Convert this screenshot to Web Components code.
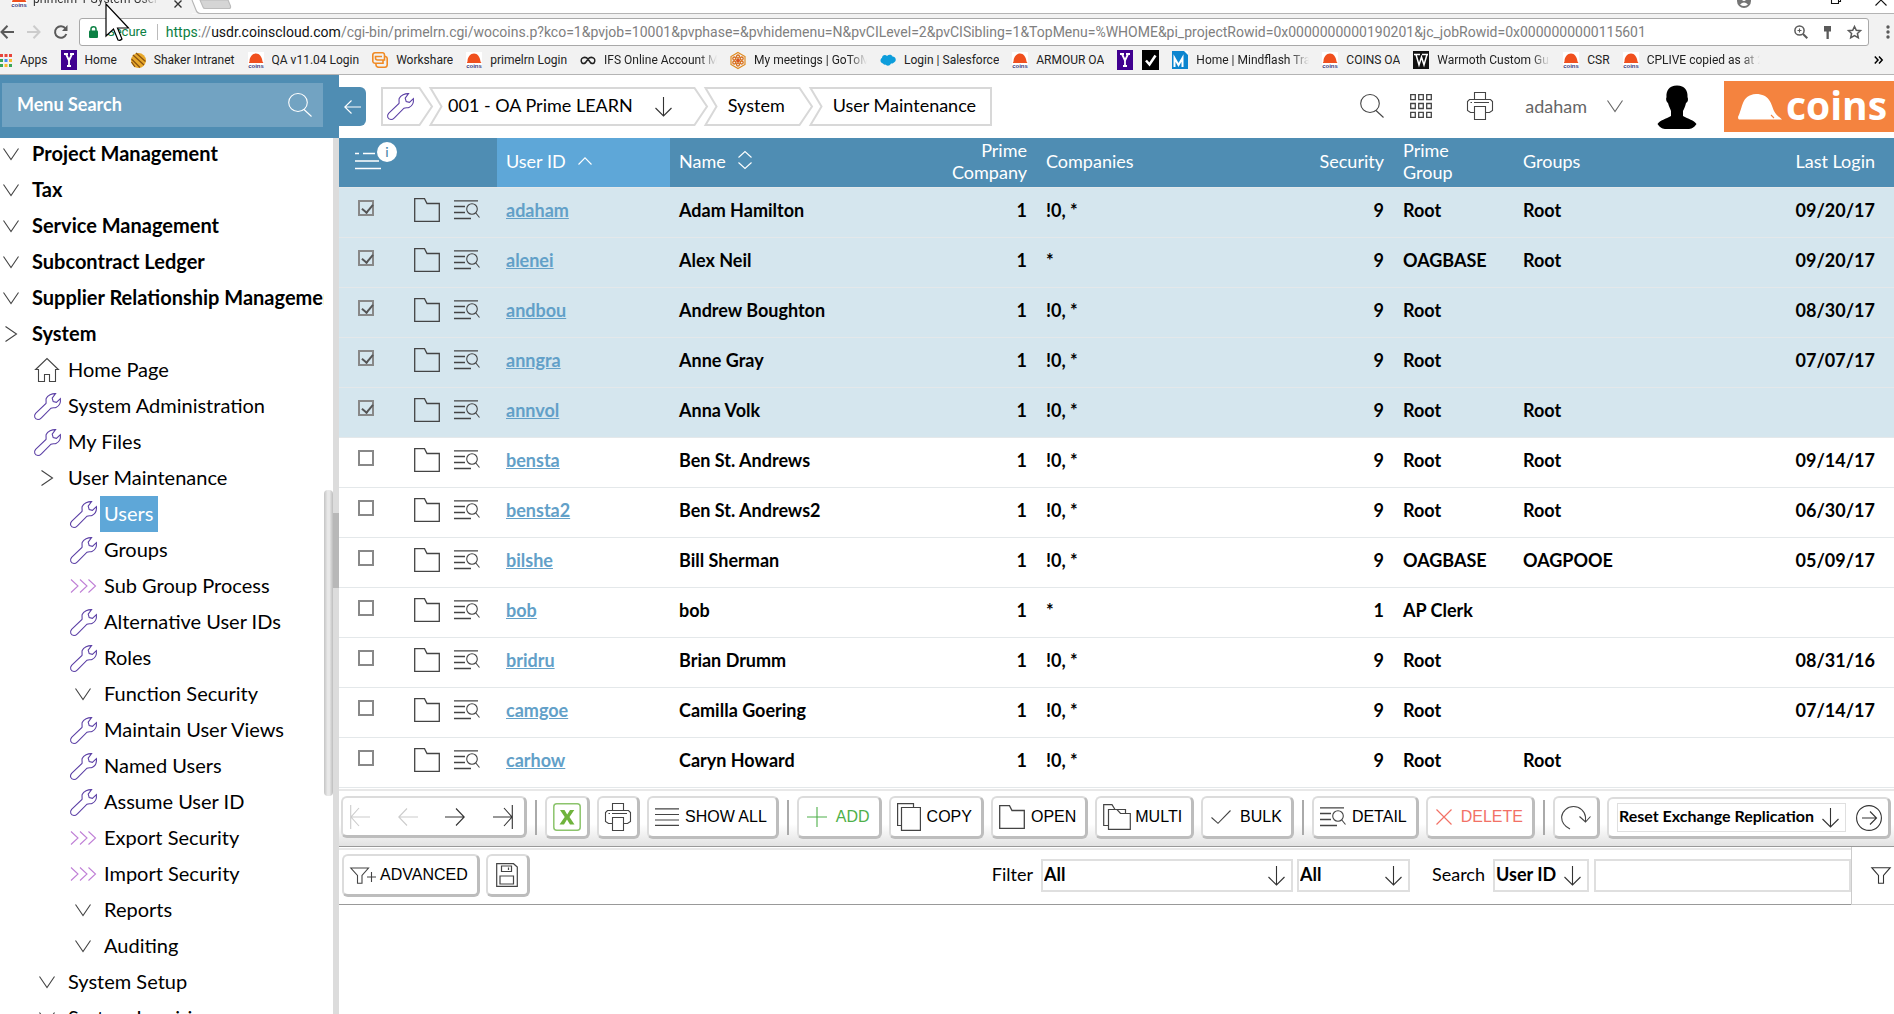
<!DOCTYPE html>
<html lang="en">
<head>
<meta charset="utf-8">
<title>primelrn-1-System-User</title>
<style>
  html, body { height: 100%; }
  body { margin: 0; overflow: hidden; background: #fff; color: #000; font: 18px/22px Lato, "Liberation Sans", sans-serif; }
</style>
</head>
<body>
<coins-app></coins-app>
<script>
const WRENCH = '<path d="M21.6 .6C18 .4 13.6 2.400 12.200 5.400C11.700 7 12.400 9 12 10.400L1.600 20.400C-.6 23 .8 26.400 4 26.500C5.600 26.500 6.400 25.800 7.400 24.800L17 15.200C18.600 14.400 20.400 15 22 14.400C25 13.200 26.800 9.800 26.400 5.600L22.400 9.400L19.200 8.600L18.200 5.200Z"/>';
const HELMET = '<rect width="16" height="16" fill="#fff" stroke="none"/><path d="M1.500 9.500C1.500 5 4.500 1.500 8 1.500S14 5 14.500 9.500L15.500 11H.8Z" fill="#f0501e" stroke="none"/><text x="8" y="15.500" text-anchor="middle" font-family="Liberation Sans" font-weight="700" font-size="6" fill="#3a3a7a" stroke="none">coins</text>';
const YAHOO = '<rect width="16" height="20" fill="#400090" stroke="none"/><path d="M3 4H7M9 4H13M5 4L8 10.500L11 4M8 10V16M6 16H10" stroke="#fff" stroke-width="1.800"/>';
const ICONS = {
  wrench: [27, 27, WRENCH],
  down: [16, 12, '<path d="M.5 .5L8 11.500L15.500 .5"/>'],
  right: [12, 16, '<path d="M.5 .5L11.500 8L.5 15.500"/>'],
  triple: [26, 14, '<path d="M1 .5L8 7L1 13.500M10 .5L17 7L10 13.500M18.500 .5L25.500 7L18.500 13.500"/>'],
  home: [24, 24, '<path d="M.6 11.500L12 .6L23.400 11.500H20.500V23.500H14.500V16.500H9.500V23.500H3.500V11.500Z"/>'],
  search: [24, 24, '<ellipse cx="10" cy="9.500" rx="9.300" ry="9"/><path d="M16 16.500L23.500 23.500"/>'],
  back: [17, 14, '<path d="M.8 7H17M7.500 .5L.8 7L7.500 13.500"/>'],
  arrow: [17, 20, '<path d="M8.500 0V19M.5 11L8.500 19L16.500 11"/>'],
  apps: [22, 24, '<path d="M.7 .7h4.600v5h-4.600zM8.700 .7h4.600v5h-4.600zM16.700 .7h4.600v5h-4.600zM.7 9.500h4.600v5h-4.600zM8.700 9.500h4.600v5h-4.600zM16.700 9.500h4.600v5h-4.600zM.7 18.300h4.600v5h-4.600zM8.700 18.300h4.600v5h-4.600zM16.700 18.300h4.600v5h-4.600z" stroke-width="1.300"/>'],
  print: [26, 28, '<path d="M7.500 7.500V.5H18.500V7.500M7.500 20.500H3.500L.5 18.500V9.500L2.500 7.500H23.500L25.500 9.500V18.500L22.500 20.500H18.500M7.500 14.500H18.500V27.500H7.500ZM3.500 10.500H5M7 10.500H22"/>'],
  person: [40, 44, '<path d="M20 .5C12 .5 9 6 9.500 12C8.500 14 9.500 17 11 18C12 22 13.500 24 14 26V31C9 34 3 35 .5 39C3 43 6 44 9 44H31C34 44 37 43 39.500 39C37 35 31 34 26 31V26C27 24 28 22 29 18C31 17 31.500 14 30.500 12C31 6 28 .5 20 .5Z" fill="#000" stroke="none"/>'],
  helmet: [44, 26, '<path d="M0 23C5 14 3 1 18 0C31 0 33 9 36 17C38 21 40 22 44 25.500H1Q0 25 0 23Z" fill="#fff" stroke="none"/><path d="M33 21L36 24" stroke="#f4833f"/>'],
  listmenu: [26, 18, '<path d="M0 1.500H4M8 1.500H20M0 9H24M0 16.500H26" stroke-width="1.500"/>'],
  up: [14, 8, '<path d="M.5 7.500L7 .8L13.500 7.500"/>'],
  sort: [14, 18, '<path d="M.5 6.500L7 .6L13.500 6.500M.5 11.500L7 17.400L13.500 11.500"/>'],
  folder: [26, 24, '<path d="M.7 .7H10.500L13 5.500H25.300V23.300H.7Z" stroke-width="1.300"/>'],
  multi: [28, 26, '<path d="M5.500 21.500H.7V.7H9L12 5.500H22.500V9M5.500 5.500H14L17.500 9.500H27.300V25.300H5.500Z" stroke-width="1.200"/>'],
  detail: [26, 20, '<path d="M0 .8H24M0 6.500H11M0 12.500H11M0 18.500H17" stroke-width="1.300"/><circle cx="18" cy="9" r="5.300"/><path d="M21.800 13L25.500 17.500"/>'],
  first: [20, 24, '<path d="M.7 0V24M20 12H1.500M9 3L1 12L9 21"/>'],
  prev: [20, 18, '<path d="M20 9H.8M9 .5L.8 9L9 17.500"/>'],
  next: [20, 18, '<path d="M0 9H19.200M11 .5L19.200 9L11 17.500"/>'],
  last: [20, 24, '<path d="M19.300 0V24M0 12H18.500M11 3L19 12L11 21"/>'],
  excel: [28, 28, '<rect x=".8" y=".8" width="26.400" height="26.400" rx="3" stroke="#8cc46c" stroke-width="1.500"/><path d="M7 7H11.500L14.200 11.500L17 7H21.300L16.500 14L21.500 21.500H17L14 16.500L11 21.500H6.500L11.700 14Z" fill="#6fb33c" stroke="none"/>'],
  lines: [24, 18, '<path d="M0 .8H24M0 6.500H24M0 12H24M0 17.300H24" stroke-width="1.200"/>'],
  plus: [20, 20, '<path d="M10 0V20M0 10H20"/>'],
  copy: [24, 28, '<path d="M4.500 22.500H.6V.6H16.500V4.500M4.500 4.500H23.400V27.400H4.500Z" stroke-width="1.200"/>'],
  tick: [20, 14, '<path d="M.5 7.500L7 13.300L19.500 .5"/>'],
  cross: [16, 16, '<path d="M.5 .5L15.500 15.500M15.500 .5L.5 15.500" stroke-width="1.200"/>'],
  redo: [30, 25, '<path d="M9 24C3 21 .6 16 .6 12A12 11.500 0 0 1 24.500 12V17M18.500 11.500L24.500 17L29.500 11.500"/>'],
  go: [26, 26, '<circle cx="13" cy="13" r="12.400"/><path d="M6 13H20.500M14 6.500L20.500 13L14 19.500"/>'],
  funnel: [20, 17, '<path d="M.8 .7H19.200L12.500 8.500V16.300H7.500V8.500Z"/>'],
  funnelplus: [26, 17, '<path d="M.8 1H18.500L12 8.500V16.300H7.500V8.500ZM17 10H26M21.500 5V15"/>'],
  save: [22, 24, '<path d="M.7 .7H17.500L21.300 4V23.300H.7ZM5.500 3H15.500V8.500H5.500ZM4 13H17.500V21H4ZM12.500 4.500V7" stroke-width="1.200"/>'],
  grid9: [12, 13, '<g stroke="none"><path d="M0 0h3v3h-3zM4.500 0h3v3h-3zM9 0h3v3h-3z" fill="#e8453c"/><path d="M0 5h3v3h-3z" fill="#3aa757"/><path d="M4.500 5h3v3h-3z" fill="#4688f1"/><path d="M9 5h3v3h-3zM4.500 10h3v3h-3z" fill="#f9bb2d"/><path d="M0 10h3v3h-3zM9 10h3v3h-3z" fill="#3aa757"/></g>'],
  coins: [16, 16, HELMET],
  yahoo: [16, 20, YAHOO],
  shaker: [16, 17, '<circle cx="8.500" cy="8.500" r="7.500" fill="#e8a92c" stroke="none"/><path d="M3 3L14 13M6 1L15.500 9.500M1.500 7L10 15.500M1.500 10L5 15" stroke="#8a5210" stroke-width="1.300"/>'],
  workshare: [16, 16, '<path d="M3 .8H11Q12.500 1 12.500 3V8H5.500Q3.500 8 3.500 6V4.500H10M3 .8Q.8 1 .8 3V9.500Q1 11 3 11.200H4M12.500 4.500H13.500Q15.200 4.800 15.200 6.500V13Q15 15.200 13 15.200H6.500Q4.200 15 4 13V11.200H11V8" stroke="#f08a24" stroke-width="1.600"/>'],
  ifs: [16, 10, '<path d="M2 8C-1 3 5 .8 8 4C11 .8 17 3 14 8Q11.500 9.500 10 7L8 4L6 7Q4.500 9.500 2 8" stroke="#222" stroke-width="1.500"/>'],
  goto: [16, 17, '<path d="M8 .5L15 4.500V12.500L8 16.500L1 12.500V4.500Z" stroke="#e08a1e" stroke-width="1.200"/><circle cx="8" cy="8.500" r="2" fill="#d9541e" stroke="none"/><g fill="none" stroke="#d9701e" stroke-width="1.300"><circle cx="8" cy="4.500" r="1.500"/><circle cx="8" cy="12.500" r="1.500"/><circle cx="4.300" cy="6.500" r="1.500"/><circle cx="11.700" cy="6.500" r="1.500"/><circle cx="4.300" cy="10.500" r="1.500"/><circle cx="11.700" cy="10.500" r="1.500"/></g>'],
  cloud: [16, 12, '<path d="M3 9.500C-.5 8.500 .2 4.500 2 4C2 1 5.500 0 7 2C9 0 12 .8 12.500 2.500C16 2.500 17 7 14 8.500C13 9.500 12 9.500 11 9.500C9.500 12.500 6.500 12 5.500 10.500C4.500 11 3.500 10.500 3 9.500Z" fill="#0d9ddb" stroke="none"/>'],
  check: [17, 20, '<rect width="17" height="20" fill="#000" stroke="none"/><path d="M4 10.500L7.500 14.500L13.500 5.500" stroke="#fff" stroke-width="2.500"/>'],
  mind: [16, 18, '<rect width="16" height="18" fill="#0c85cf" stroke="none"/><path d="M2.500 16V7L6.500 14L10.500 7V16" stroke="#fff" stroke-width="2"/><path d="M12 0H16V4Z" fill="#fff" stroke="none"/>'],
  wsquare: [16, 18, '<rect width="16" height="18" fill="#111" stroke="none"/><path d="M1 3.500H7M9 3.500H15M3 3.500L6 14L8.500 6L11 14L14 3.500" stroke="#fff" stroke-width="1.500"/>'],
  navback: [14, 14, '<path d="M14 7H1.500M7.500 .8L1.500 7L7.500 13.200" stroke-width="2"/>'],
  navnext: [14, 14, '<path d="M0 7H12.500M6.500 .8L12.500 7L6.500 13.200" stroke-width="2"/>'],
  reload: [14, 14, '<path d="M12.300 9A5.800 5.800 0 1 1 11.500 3.500" stroke-width="2"/><path d="M13.500 0V6H8Z" fill="currentColor" stroke="none"/>'],
  lock: [9, 12, '<rect y="4.500" width="9" height="7.500" rx="1" fill="#0b8043" stroke="none"/><path d="M2 5V3Q2 .8 4.500 .8T7 3V5" stroke="#0b8043" stroke-width="1.500"/>'],
  zoom: [14, 14, '<circle cx="5.500" cy="5.500" r="4.600" stroke-width="1.500"/><path d="M9 9L13.300 13.300" stroke-width="2"/><path d="M3.500 5.500H7.500M5.500 3.500V7.500"/>'],
  key: [9, 13, '<path d="M1 0H8V5.500H5.800V13H3.500V5.500H1Z" fill="currentColor" stroke="none"/>'],
  star: [15, 14, '<path d="M7.500 1.500L9.300 5.300L13.500 5.700L10.400 8.500L11.300 12.700L7.500 10.500L3.700 12.700L4.600 8.500L1.500 5.700L5.700 5.300Z" stroke-width="1.500"/>'],
  dots: [4, 14, '<g fill="currentColor" stroke="none"><circle cx="2" cy="2" r="1.700"/><circle cx="2" cy="7" r="1.700"/><circle cx="2" cy="12" r="1.700"/></g>'],
  account: [14, 14, '<circle cx="7" cy="7" r="7" fill="#757575" stroke="none"/><circle cx="7" cy="5" r="2" fill="#fff" stroke="none"/><path d="M3 10.500Q7 6.500 11 10.500Q7 13.500 3 10.500" fill="#fff" stroke="none"/>'],
  restore: [10, 10, '<path d="M.5 2.500H7.500V9.500H.5ZM2.500 2V.5H9.500V7.500H8"/>'],
  close: [12, 12, '<path d="M.5 .5L11.500 11.500M11.500 .5L.5 11.500"/>'],
  tabclose: [8, 8, '<path d="M.5 .5L7.500 7.500M7.500 .5L.5 7.500" stroke-width="1.400"/>'],
  more: [9, 8, '<path d="M.8 .5L4 4L.8 7.500M5 .5L8.200 4L5 7.500" stroke-width="1.500"/>'],
  tabedge: [42, 14, '<path d="M0 0L4 10Q5 13.500 9 13.500H0Z" fill="#f2f2f2" stroke="none"/><path d="M0 0L4 10Q5 13.500 9 13.500H42" stroke="#b4b4b4"/><path d="M8 0L11 7Q11.500 8.500 13 8.500H37Q39 8.500 38.500 6L36 0Z" fill="#d5d5d5" stroke="#bcbcbc"/>'],
  pointer: [26, 40, '<path d="M1 1V33L8.500 26L13 37Q15 38 17 36L12.500 25H23.500Z" fill="#fff" stroke="#000" stroke-width="1.200"/>'],
  notch: [14, 39, '<path d="M14 1H1.500L12.500 19.500L1.500 38H14" stroke-width="2"/>'],
  tip: [14, 39, '<path d="M0 1H.5L13 19.500L.5 38H0" stroke-width="2"/>']
};

/* Registers an element whose shadow root is filled by css and a markup function. */
function component(tag, css, markup) {
  customElements.define(tag, class extends HTMLElement {
    constructor() { super(); this.attachShadow({ mode: 'open' }); }
    connectedCallback() {
      this.shadowRoot.innerHTML = `<style>*{box-sizing:border-box}${css}</style>${markup(this)}`;
    }
  });
}
const attr = (el, n, d = '') => el.getAttribute(n) ?? d;

component('ui-icon', ':host{display:inline-flex;flex:none}svg{display:block;overflow:visible}', el => {
  const [w, h, body] = ICONS[attr(el, 'name')];
  return `<svg width="${w}" height="${h}" viewBox="0 0 ${w} ${h}" fill="none" stroke="currentColor" stroke-width="1.100" aria-hidden="true">${body}</svg>`;
});

/* ---------- Browser frame ---------- */
component('book-mark', `
  :host{display:block;flex:none}
  a{display:flex;align-items:center;gap:8px;height:20px;color:#222;text-decoration:none}
  span{overflow:hidden;white-space:nowrap}
  :host([cut]) span{width:113px;-webkit-mask-image:linear-gradient(90deg,#000 84%,transparent)}
`, el => `<a href="#"${el.textContent ? '' : ' aria-label="Bookmark"'}><ui-icon name="${attr(el, 'icon')}"></ui-icon>${el.textContent ? '<span><slot></slot></span>' : ''}</a>`);

component('browser-frame', `
  :host{display:block;flex:none;background:#f2f2f2;font:12px/16px Roboto,"Noto Sans",sans-serif;border-bottom:1px solid #b4b4b4}
  .strip{display:flex;height:14px;overflow:hidden;background:#fff}
  .tab{display:flex;align-items:flex-start;width:192px;padding-left:11px;background:#f2f2f2;gap:6px;color:#333}
  .tab ui-icon,.tab span{margin-top:-9px}
  .tab span{flex:none;width:126px;overflow:hidden;white-space:nowrap;-webkit-mask-image:linear-gradient(90deg,#000 86%,transparent)}
  .tab .x{margin:0 0 0 9px}
  .rest{flex:1;display:flex;justify-content:flex-end;border-bottom:1px solid #b4b4b4;padding-right:7px;color:#111}
  .rest ui-icon{margin-top:-6px}
  .acc{margin-right:80px}.res{margin-right:34px}
  .nav{display:flex;align-items:center;margin-top:4px;height:28px;color:#5a5a5a}
  button{border:0;background:none;padding:0;display:flex;color:inherit}
  .b{width:14px}.f{margin-left:13px;color:#ccc}.r{margin-left:13px;margin-right:11px}
  .url{flex:1;display:flex;align-items:center;height:28px;border:1px solid #a9a9a9;border-radius:3px;background:#fff;padding:0 6px 0 9px}
  .sec{margin-left:9px;padding-right:10px;border-right:1px solid #bbb;color:#0b8043;font-size:13px}
  .addr{flex:1;margin-left:8px;white-space:nowrap;overflow:hidden;color:#808080;font-size:14px;line-height:20px}
  .addr i{font-style:normal;color:#0b8043}.addr b{font-weight:400;color:#111}
  .acts{display:flex;align-items:center;gap:15px}
  .menu{margin:0 0 0 17px;width:8px;overflow:hidden}
  .marks{display:flex;align-items:center;height:28px;gap:13px;overflow:hidden}
  .marks .pair{margin-left:-4px}
  .marks .more{margin-left:auto;margin-right:11px}
  .cursor{position:absolute;left:105px;top:3px;z-index:5}
`, () => `
  <div class="strip">
    <div class="tab"><ui-icon name="coins"></ui-icon><span>primelrn-1-System-User</span><ui-icon class="x" name="tabclose"></ui-icon></div>
    <ui-icon name="tabedge"></ui-icon>
    <div class="rest"><ui-icon class="acc" name="account"></ui-icon><ui-icon class="res" name="restore"></ui-icon><ui-icon name="close"></ui-icon></div>
  </div>
  <div class="nav">
    <button class="b" aria-label="Back"><ui-icon name="navback"></ui-icon></button>
    <button class="f" aria-label="Forward"><ui-icon name="navnext"></ui-icon></button>
    <button class="r" aria-label="Reload"><ui-icon name="reload"></ui-icon></button>
    <div class="url"><ui-icon name="lock"></ui-icon><span class="sec">Secure</span>
      <div class="addr"><i>https</i>://<b>usdr.coinscloud.com</b>/cgi-bin/primelrn.cgi/wocoins.p?kco=1&amp;pvjob=10001&amp;pvphase=&amp;pvhidemenu=N&amp;pvCILevel=2&amp;pvCISibling=1&amp;TopMenu=%WHOME&amp;pi_projectRowid=0x0000000000190201&amp;jc_jobRowid=0x0000000000115601</div>
      <div class="acts"><ui-icon name="zoom"></ui-icon><ui-icon name="key"></ui-icon><ui-icon name="star"></ui-icon></div>
    </div>
    <button class="menu" aria-label="Menu"><ui-icon name="dots"></ui-icon></button>
  </div>
  <nav class="marks">
    <book-mark icon="grid9">Apps</book-mark><book-mark icon="yahoo">Home</book-mark><book-mark icon="shaker">Shaker Intranet</book-mark>
    <book-mark icon="coins">QA v11.04 Login</book-mark><book-mark icon="workshare">Workshare</book-mark><book-mark icon="coins">primelrn Login</book-mark>
    <book-mark icon="ifs" cut>IFS Online Account M</book-mark><book-mark icon="goto" cut>My meetings | GoToM</book-mark>
    <book-mark icon="cloud">Login | Salesforce</book-mark><book-mark icon="coins">ARMOUR OA</book-mark><book-mark icon="yahoo"></book-mark><book-mark class="pair" icon="check"></book-mark>
    <book-mark icon="mind" cut>Home | Mindflash Tra</book-mark><book-mark icon="coins">COINS OA</book-mark><book-mark icon="wsquare" cut>Warmoth Custom Gu</book-mark>
    <book-mark icon="coins">CSR</book-mark><book-mark icon="coins" cut>CPLIVE copied as at 2</book-mark>
    <ui-icon class="more" name="more"></ui-icon>
  </nav>
  <ui-icon class="cursor" name="pointer"></ui-icon>
`);

/* ---------- Side menu ---------- */
component('menu-node', `
  :host{display:block}
  a{display:flex;align-items:center;height:36px;padding-left:calc(var(--level) * 36px);color:#000;text-decoration:none;white-space:nowrap;font-size:20px;line-height:34px}
  .ic{display:flex;flex:none;width:22px;justify-content:center;color:#444}
  .ic.wrench{color:#5b3fa5}.ic.triple{color:#bf7fd6}
  .tx{margin-left:6px;padding:0 5px 2px 4px}
  :host([root]) .tx{font-weight:700}
  :host([current]) .tx{background:#5ea7d8;color:#fff}
`, el => `<a href="#" style="--level:${attr(el, 'level', '0')}"><span class="ic ${attr(el, 'icon')}"><ui-icon name="${attr(el, 'icon')}"></ui-icon></span><span class="tx"><slot></slot></span></a>`);

const MENU = [
  [0, 'down', 'Project Management'], [0, 'down', 'Tax'], [0, 'down', 'Service Management'], [0, 'down', 'Subcontract Ledger'],
  [0, 'down', 'Supplier Relationship Management'], [0, 'right', 'System'], [1, 'home', 'Home Page'], [1, 'wrench', 'System Administration'],
  [1, 'wrench', 'My Files'], [1, 'right', 'User Maintenance'], [2, 'wrench', 'Users'], [2, 'wrench', 'Groups'], [2, 'triple', 'Sub Group Process'],
  [2, 'wrench', 'Alternative User IDs'], [2, 'wrench', 'Roles'], [2, 'down', 'Function Security'], [2, 'wrench', 'Maintain User Views'],
  [2, 'wrench', 'Named Users'], [2, 'wrench', 'Assume User ID'], [2, 'triple', 'Export Security'], [2, 'triple', 'Import Security'],
  [2, 'down', 'Reports'], [2, 'down', 'Auditing'], [1, 'down', 'System Setup'], [1, 'down', 'System Inquiries']
];
component('side-menu', `
  :host{display:flex;flex-direction:column;flex:none;width:339px;min-height:0}
  .head{background:#4f8db3;padding:8px 16px 11px 2px}
  .box{display:flex;align-items:center;height:44px;background:#72a3c2;padding:0 11px 0 15px;color:#fff}
  input{flex:1;min-width:0;border:0;outline:0;background:none;font:700 18px/22px Lato,sans-serif;padding:0 0 3px;color:#fff}
  input::placeholder{color:#fff;opacity:1}
  .body{flex:1;min-height:0;display:flex;overflow:hidden}
  nav{flex:1;min-width:0;overflow:hidden}
  nav div{margin-top:-2px}
  .track{width:9px;display:flex;flex-direction:column;padding-top:352px}
  .thumb{height:306px;flex:none;border-radius:4px;background:linear-gradient(90deg,#c4c4c4,#e8e8e8 40%,#e8e8e8 60%,#bdbdbd)}
  .split{width:6px;background:#dcdcdc;padding-top:375px}
  .split i{display:block;height:75px;background:#b8b8b8}
`, () => `
  <div class="head"><div class="box"><input type="search" aria-label="Menu Search" placeholder="Menu Search"><ui-icon name="search"></ui-icon></div></div>
  <div class="body"><nav><div>${MENU.map(([l, i, t]) => `<menu-node level="${l}" icon="${i}"${l ? '' : ' root'}${t === 'Users' ? ' current' : ''}>${t}</menu-node>`).join('')}</div></nav>
  <div class="track"><div class="thumb"></div></div><div class="split"><i></i></div></div>
`);

/* ---------- Top bar ---------- */
component('crumb-step', `
  :host{display:flex;flex:none;height:39px;color:#d8d8d8}
  :host(:not([first])){margin-left:-4px}
  .mid{display:flex;align-items:center;gap:22px;border:solid #d8d8d8;border-width:2px 0;font-size:18px}
  :host([first]) .mid{border-left-width:2px;padding:0 5px 0 4px}
  :host([last]) .mid{border-right-width:2px;padding-right:14px}
  :host(:not([first])) .mid{padding-left:10px}
  :host(:not([first])) a{padding-bottom:3px}
  :host(:not([first]):not([last])) .mid{padding-right:14px}
  :host([wide]) .mid{padding-left:5px!important;padding-right:22px!important}
  a{display:flex;color:#000;text-decoration:none;white-space:nowrap}
  ::slotted(ui-icon){color:#333}
`, el => `${el.hasAttribute('first') ? '' : '<ui-icon name="notch"></ui-icon>'}<div class="mid"><a href="#"><slot></slot></a><slot name="end"></slot></div>${el.hasAttribute('last') ? '' : '<ui-icon name="tip"></ui-icon>'}`);

component('top-bar', `
  :host{display:flex;align-items:center;flex:none;height:63px;color:#444}
  button{border:0;background:none;padding:0;display:flex;align-items:center;justify-content:center;color:inherit;font:inherit}
  .back{width:27px;height:39px;background:#4f8db3;border-radius:0 6px 6px 0;color:#fff}
  .crumbs{display:flex;margin-left:15px}
  .tools{margin-left:auto;display:flex;align-items:center}
  .tools button{padding-bottom:2px}
  .s{margin-right:26px}.g{margin-right:35px}.p{margin-right:32px}
  .user{gap:20px;color:#666;margin-right:34px}
  .logo{display:flex;align-items:center;gap:4px;margin:0 0 0 27px;width:170px;height:51px;padding-left:14px;background:#f4833f;color:#fff;font:700 39px/39px "Open Sans",sans-serif}
  .logo span{padding-bottom:4px}
`, () => `
  <button class="back" aria-label="Collapse menu"><ui-icon name="back"></ui-icon></button>
  <nav class="crumbs">
    <crumb-step first><ui-icon name="wrench" style="color:#5b3fa5"></ui-icon></crumb-step>
    <crumb-step wide>001 - OA Prime LEARN<ui-icon slot="end" name="arrow"></ui-icon></crumb-step>
    <crumb-step>System</crumb-step><crumb-step last>User Maintenance</crumb-step>
  </nav>
  <div class="tools">
    <button class="s" aria-label="Search"><ui-icon name="search"></ui-icon></button>
    <button class="g" aria-label="Apps"><ui-icon name="apps"></ui-icon></button>
    <button class="p" aria-label="Print"><ui-icon name="print"></ui-icon></button>
    <button class="user">adaham <ui-icon name="down"></ui-icon></button>
    <ui-icon name="person"></ui-icon>
    <div class="logo"><ui-icon name="helmet"></ui-icon><span>coins</span></div>
  </div>
`);

/* ---------- User table ---------- */
const USERS = [
  ['adaham', 'Adam Hamilton', '1', '!0, *', '9', 'Root', 'Root', '09/20/17', 1], ['alenei', 'Alex Neil', '1', '*', '9', 'OAGBASE', 'Root', '09/20/17', 1],
  ['andbou', 'Andrew Boughton', '1', '!0, *', '9', 'Root', '', '08/30/17', 1], ['anngra', 'Anne Gray', '1', '!0, *', '9', 'Root', '', '07/07/17', 1],
  ['annvol', 'Anna Volk', '1', '!0, *', '9', 'Root', 'Root', '', 1], ['bensta', 'Ben St. Andrews', '1', '!0, *', '9', 'Root', 'Root', '09/14/17'],
  ['bensta2', 'Ben St. Andrews2', '1', '!0, *', '9', 'Root', 'Root', '06/30/17'], ['bilshe', 'Bill Sherman', '1', '!0, *', '9', 'OAGBASE', 'OAGPOOE', '05/09/17'],
  ['bob', 'bob', '1', '*', '1', 'AP Clerk', '', ''], ['bridru', 'Brian Drumm', '1', '!0, *', '9', 'Root', '', '08/31/16'],
  ['camgoe', 'Camilla Goering', '1', '!0, *', '9', 'Root', '', '07/14/17'], ['carhow', 'Caryn Howard', '1', '!0, *', '9', 'Root', 'Root', '']
];
const RIGHT = [2, 4, 7];
component('user-grid', `
  :host{display:block;flex:none}
  table{width:100%;table-layout:fixed;border-collapse:separate;border-spacing:0}
  th,td{height:50px;padding:0 9px;border-bottom:1px solid #e4e8ea;text-align:left;vertical-align:middle;white-space:nowrap}
  th{background:#4f8db3;color:#fff;font-weight:400;font-size:18px;line-height:22px;white-space:normal;padding-bottom:4px}
  th.sel{background:#5ea7d8}
  th ui-icon{margin-left:8px;vertical-align:3px}
  th .so{vertical-align:-1px}
  td{font-size:18px;line-height:22px;font-weight:700;padding-bottom:5px}
  th.r,td.r{text-align:right;padding-right:10px}
  th:last-child,td.r:last-child{padding-right:19px}
  th.r:last-child{padding-right:19px}
  tr.on td{background:#d5e6ee}
  a{color:#62a0c8}
  .tools{display:flex;align-items:center;padding-left:10px;color:#444}
  .tools input{appearance:none;width:16px;height:16px;margin:0 40px 4px 0;border:2px solid #888;background:none;flex:none;display:grid;place-items:center}
  .tools input:checked::after{content:"";width:9px;height:5px;border:solid #555;border-width:0 0 2px 2px;rotate:-50deg;translate:1px -1px}
  .tools button{border:0;background:none;padding:0;display:flex;color:inherit;margin-right:14px}
  .list{display:flex;align-items:center;padding-left:7px}
  .list ui-icon{margin:0}
  .info{display:grid;place-items:center;width:20px;height:20px;margin:-18px 0 0 -4px;border-radius:50%;background:#fff;color:#3c7ca3;font:14px/20px Lato,sans-serif}
`, () => `
  <table>
    <colgroup><col style="width:158px"><col style="width:173px"><col style="width:256px"><col style="width:111px"><col style="width:237px"><col style="width:120px"><col style="width:120px"><col style="width:220px"><col style="width:160px"></colgroup>
    <thead><tr><th><div class="list"><ui-icon name="listmenu"></ui-icon><span class="info">i</span></div></th><th class="sel">User ID <ui-icon name="up"></ui-icon></th><th>Name <ui-icon class="so" name="sort"></ui-icon></th><th class="r">Prime Company</th><th>Companies</th><th class="r">Security</th><th>Prime<br>Group</th><th>Groups</th><th class="r">Last Login</th></tr></thead>
    <tbody>${USERS.map(u => `<tr class="${u[8] ? 'on' : ''}"><td><div class="tools"><input type="checkbox" aria-label="Select ${u[0]}"${u[8] ? ' checked' : ''}><button aria-label="Open ${u[0]}"><ui-icon name="folder"></ui-icon></button><button aria-label="Details of ${u[0]}"><ui-icon name="detail"></ui-icon></button></div></td>${u.slice(0, 8).map((c, i) => `<td${RIGHT.includes(i) ? ' class="r"' : ''}>${i ? c : `<a href="#">${c}</a>`}</td>`).join('')}</tr>`).join('')}</tbody>
  </table>
`);

/* ---------- Controls ---------- */
const CARD = 'border:2px solid #dcdcdc;border-right:3px solid #bdbdbd;border-bottom:3px solid #bdbdbd;border-radius:6px;background:#fff;';
component('tool-button', `
  :host{display:block;flex:none}
  button{display:flex;align-items:center;gap:6px;height:43px;padding:0 9px 0 6px;${CARD}font:16px/20px "Liberation Sans",Arial,sans-serif;color:#000;white-space:nowrap}
  ui-icon{color:#444}
  :host([only]) button{padding:0 6px}
  :host([roomy]) button{padding:0 9px 0 8px;gap:9px}
  :host([tight]) button{gap:4px}
  :host([tone=add]) :is(button,ui-icon){color:#4fb04a}
  :host([tone=del]) :is(button,ui-icon){color:#f27166}
`, el => `<button${el.textContent.trim() ? '' : ` aria-label="${attr(el, 'icon')}"`}><ui-icon name="${attr(el, 'icon')}"></ui-icon><slot></slot></button>`);

component('pick-list', `
  :host{display:flex;align-items:center;gap:8px;flex:none}
  .f{display:grid;align-items:center;width:var(--w);height:var(--h,33px);border:var(--b,2px) solid #dfdfdf;background:#fff}
  select,ui-icon{grid-area:1/1}
  ui-icon{justify-self:end;margin-right:6px;pointer-events:none;color:#333}
  label{padding-bottom:3px}
  select{appearance:none;width:100%;height:100%;border:0;outline:0;background:none;padding:0 0 4px 1px;font:700 var(--fs,18px)/22px Lato,sans-serif;color:#000}
`, el => `${el.hasAttribute('quiet') ? '' : `<label for="s">${attr(el, 'label')}</label>`}<div class="f"><select id="s"${el.hasAttribute('quiet') ? ` aria-label="${attr(el, 'label')}"` : ''}><option>${attr(el, 'value')}</option></select><ui-icon name="arrow"></ui-icon></div>`);

component('action-bar', `
  :host{display:flex;align-items:flex-start;gap:7px;flex:none;height:58px;margin-top:1px;padding:5px 3px 0 2px;border-top:2px solid #e8e8e8;border-bottom:1px solid #999;background:linear-gradient(#fff 60%,#e2e2e2)}
  .pager{display:flex;align-items:center;justify-content:space-between;width:186px;height:42px;padding:0 11px 0 7px;${CARD}}
  .pager button{border:0;background:none;padding:0;display:flex;color:#333}
  .pager button:disabled{color:#ccc}
  hr{width:2px;height:35px;margin:4px 1px 0;border:0;background:#aaa}
  .reset{flex:1;display:flex;align-items:center;justify-content:space-between;height:42px;margin-top:1px;padding:0 6px 0 8px;${CARD}}
  .reset button{border:0;background:none;padding:0;display:flex;color:#333}
  pick-list{--w:229px;--h:29px;--b:1px;--fs:16px}
`, () => `
  <div class="pager"><button disabled aria-label="First"><ui-icon name="first"></ui-icon></button><button disabled aria-label="Previous"><ui-icon name="prev"></ui-icon></button><button aria-label="Next"><ui-icon name="next"></ui-icon></button><button aria-label="Last"><ui-icon name="last"></ui-icon></button></div>
  <hr><tool-button only icon="excel"></tool-button><tool-button only icon="print"></tool-button><tool-button icon="lines">SHOW ALL</tool-button>
  <hr><tool-button roomy icon="plus" tone="add">ADD</tool-button><tool-button icon="copy">COPY</tool-button><tool-button icon="folder">OPEN</tool-button><tool-button tight icon="multi">MULTI</tool-button><tool-button roomy icon="tick">BULK</tool-button>
  <hr><tool-button icon="detail">DETAIL</tool-button><tool-button roomy icon="cross" tone="del">DELETE</tool-button>
  <hr><tool-button only icon="redo"></tool-button>
  <div class="reset"><pick-list quiet label="Action" value="Reset Exchange Replication"></pick-list><button aria-label="Go"><ui-icon name="go"></ui-icon></button></div>
`);

component('filter-bar', `
  :host{display:flex;flex:none;height:58px;font-size:18px}
  .main{flex:1;display:flex;align-items:center;margin-top:1px;border-top:2px solid #e8e8e8;border-bottom:1px solid #999;padding:0 0 3px 3px;gap:6px}
  .end{display:flex;align-items:center;margin-left:auto}
  .a{--w:252px}.b{--w:113px;margin:0 22px 0 4px}.c{--w:96px}
  input{width:257px;height:33px;margin-left:5px;border:2px solid #dfdfdf;font:700 18px Lato,sans-serif}
  .side{width:43px;display:flex;align-items:center;justify-content:flex-end;padding:0 3px 0 0;border:solid #ccc;border-width:0 0 1px 1px}
  .side button{border:0;background:none;padding:0;display:flex;color:#333}
`, () => `
  <div class="main"><tool-button tight icon="funnelplus">ADVANCED</tool-button><tool-button roomy icon="save"></tool-button>
    <div class="end"><pick-list class="a" label="Filter" value="All"></pick-list><pick-list class="b" quiet label="Filter value" value="All"></pick-list><pick-list class="c" label="Search" value="User ID"></pick-list><input type="text" aria-label="Search text"></div>
  </div>
  <div class="side"><button aria-label="Filter"><ui-icon name="funnel"></ui-icon></button></div>
`);

component('coins-app', `
  :host{display:flex;flex-direction:column;height:100vh;overflow:hidden}
  .page{flex:1;min-height:0;display:flex}
  main{flex:1;min-width:0;display:flex;flex-direction:column}
`, () => `<browser-frame></browser-frame><div class="page"><side-menu></side-menu><main><top-bar></top-bar><user-grid></user-grid><action-bar></action-bar><filter-bar></filter-bar></main></div>`);
</script>
</body>
</html>
